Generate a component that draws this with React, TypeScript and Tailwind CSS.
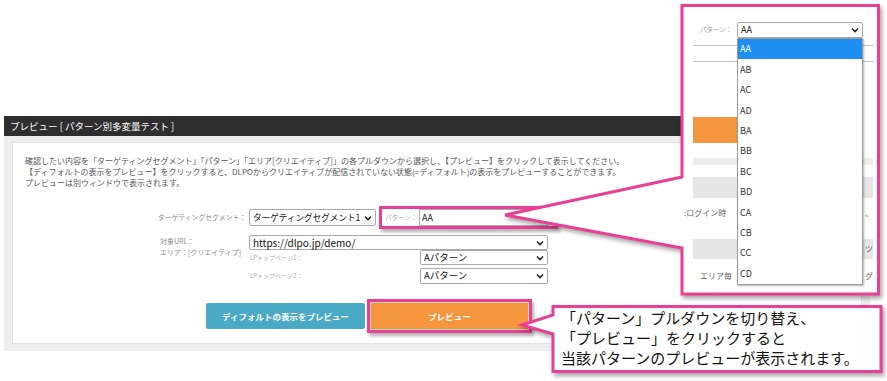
import React from "react";

type SelectProps = {
  value: string;
  className: string;
  textClass: string;
};

function Chevron() {
  return (
    <svg width="8" height="6" viewBox="0 0 8 6" className="shrink-0">
      <path d="M1 1.5l3 3 3-3" fill="none" stroke="#222" strokeWidth="1.6" />
    </svg>
  );
}

function FakeSelect({ value, className, textClass }: SelectProps) {
  return (
    <div
      className={`flex items-center justify-between rounded-[2px] border border-[#a9a9a9] bg-white pl-[3px] pr-[3px] ${className}`}
    >
      <span className={`whitespace-nowrap ${textClass}`}>{value}</span>
      <Chevron />
    </div>
  );
}

const options = ["AA", "AB", "AC", "AD", "BA", "BB", "BC", "BD", "CA", "CB", "CC", "CD"];

export default function App() {
  return (
    <div className="relative h-[381px] w-[887px] overflow-hidden bg-white font-['Noto_Sans_CJK_JP','Noto_Sans',sans-serif] text-[#333]">
      {/* page */}
      <div className="pl-[4px] pt-[116px]">
        <div className="w-[866px]">
          <div className="flex h-[20px] items-center bg-[#2e2e2e] pl-[6px] text-[9.5px] text-white">
            プレビュー [ パターン別多変量テスト ]
          </div>
          <div className="bg-[#eeeeee] px-[8px] pb-[7px] pt-[6px]">
            <div className="h-[202px] border border-[#e2e2e2] bg-white pl-[12px] pt-[12px]">
              <div className="whitespace-nowrap text-[8px] leading-[11px] text-[#555]">
                <p>確認したい内容を「ターゲティングセグメント」「パターン」「エリア[クリエイティブ]」の各プルダウンから選択し、【プレビュー】をクリックして表示してください。</p>
                <p>【ディフォルトの表示をプレビュー】をクリックすると、DLPOからクリエイティブが配信されていない状態(=ディフォルト)の表示をプレビューすることができます。</p>
                <p>プレビューは別ウィンドウで表示されます。</p>
              </div>

              <div className="ml-[135px] mt-[18px]">
                <div className="flex h-[23px] items-center">
                  <div className="flex w-[89px] justify-end whitespace-nowrap pr-[3px] text-[6.8px] text-[#888]">
                    ターゲティングセグメント：
                  </div>
                  <FakeSelect value="ターゲティングセグメント1" className="h-[17px] w-[127px]" textClass="text-[8.6px] text-[#111]" />
                  <div className="ml-[3px] flex h-[23px] w-[179px] items-center border-[3px] border-[#e84096] pl-[3px] shadow-[2px_3px_3px_rgba(0,0,0,0.3)]">
                    <span className="w-[34px] whitespace-nowrap text-[6.5px] text-[#aaa]">パターン：</span>
                    <div className="flex h-[17px] w-[129px] items-center border border-[#aaa] pl-[2px] text-[9px] text-[#111]">AA</div>
                  </div>
                </div>

                <div className="mt-[6px] flex">
                  <div className="w-[89px] pt-[1px] text-[7px] leading-[11px] text-[#888]">
                    <p>対象URL：</p>
                    <p className="whitespace-nowrap">エリア：[クリエイティブ]</p>
                  </div>
                  <div className="w-[299px]">
                    <FakeSelect value="https://dlpo.jp/demo/" className="h-[15px] w-full" textClass="text-[10px] text-[#111]" />
                    <div className="flex flex-col gap-[3px]">
                      <div className="flex h-[15px] items-center">
                        <span className="w-[171px] pl-[1px] text-[6px] text-[#aaa]">LPトップページ1：</span>
                        <FakeSelect value="Aパターン" className="h-[15px] w-[128px]" textClass="text-[9.5px] text-[#111]" />
                      </div>
                      <div className="flex h-[15px] items-center">
                        <span className="w-[171px] pl-[1px] text-[6px] text-[#aaa]">LPトップページ2：</span>
                        <FakeSelect value="Aパターン" className="h-[16px] w-[128px]" textClass="text-[9.5px] text-[#111]" />
                      </div>
                    </div>
                  </div>
                </div>
              </div>

              <div className="ml-[181px] mt-[16px] flex items-center">
                <div className="flex h-[26px] w-[159px] items-center justify-center rounded-[2px] bg-[#4aaac6] text-[8.5px] font-bold text-white">
                  ディフォルトの表示をプレビュー
                </div>
                <div className="ml-[2px] h-[34px] w-[165px] border-[3px] border-[#e84096] bg-[#f7d7b8] p-[1px] shadow-[2px_3px_3px_rgba(0,0,0,0.3)]">
                  <div className="flex h-full items-center justify-center bg-[#f5963f] text-[8.5px] font-bold text-white">プレビュー</div>
                </div>
              </div>
            </div>
          </div>
        </div>
      </div>

      {/* upper callout shape */}
      <svg
        width="887"
        height="381"
        viewBox="0 0 887 381"
        className="pointer-events-none absolute left-0 top-0 drop-shadow-[2px_3px_2px_rgba(0,0,0,0.35)]"
      >
        <polygon
          points="682,5.5 878.5,5.5 878.5,294 682,294 682,248 505,215 682,177"
          fill="#fff"
          stroke="#e84096"
          strokeWidth="3"
          strokeLinejoin="miter"
        />
      </svg>

      {/* upper callout content: zoomed dropdown */}
      <div className="absolute left-[684px] top-[7px] h-[285px] w-[193px] overflow-hidden bg-white">
        <div className="pl-[9px] pt-[38px]">
          <div className="h-px w-[180px] bg-[#bdbdbd]" />
          <div className="mt-[15px] h-px w-[180px] bg-[#bdbdbd]" />
          <div className="mt-[55px] h-[26px] w-[44px] bg-[#f5963f]" />
          <div className="mt-[15px] h-[7px] w-[180px] bg-[#ececec]" />
          <div className="mt-[12px] h-[21px] w-[180px] bg-[#e6e6e6]" />
          <div className="-ml-[9px] mt-[9px] flex w-[193px] justify-between whitespace-nowrap pr-[4px] text-[8px] leading-[12px] text-[#666]">
            <span>:ログイン時</span>
            <span>、</span>
          </div>
          <div className="mt-[20px] flex h-[20px] w-[180px] items-center justify-end bg-[#e6e6e6] text-[8px] text-[#666]">ツ</div>
          <div className="mt-[11px] flex w-[180px] justify-between whitespace-nowrap pl-[7px] text-[8px] leading-[12px] text-[#666]">
            <span>エリア毎</span>
            <span>グ</span>
          </div>
        </div>

        <div className="absolute left-[16px] top-[15px] flex items-center">
          <span className="w-[37px] whitespace-nowrap text-[6.5px] text-[#999]">パターン：</span>
          <FakeSelect value="AA" className="h-[16px] w-[126px]" textClass="text-[9px] text-[#111]" />
        </div>
        <div className="absolute left-[53px] top-[31px] w-[126px] border border-[#9a9a9a] bg-white shadow-[1px_1px_2px_rgba(0,0,0,0.3)]">
          {options.map((opt, i) => (
            <div
              key={opt}
              className={
                i === 0
                  ? "flex h-[20.4px] items-center bg-[#1e8ff0] pl-[2px] text-[9px] text-white"
                  : "flex h-[20.4px] items-center pl-[2px] text-[9px] text-[#333]"
              }
            >
              {opt}
            </div>
          ))}
        </div>
      </div>

      {/* lower callout */}
      <svg
        width="887"
        height="381"
        viewBox="0 0 887 381"
        className="pointer-events-none absolute left-0 top-0 drop-shadow-[2px_3px_2px_rgba(0,0,0,0.35)]"
      >
        <polygon
          points="553,306.5 881,306.5 881,371.5 553,371.5 553,334 522,325 553,315"
          fill="#fff"
          stroke="#e84096"
          strokeWidth="3"
        />
      </svg>
      <div className="absolute left-[556px] top-[308px] whitespace-nowrap pl-[5px] text-[15px] leading-[20px] text-[#111]">
        <p>「パターン」プルダウンを切り替え、</p>
        <p>「プレビュー」をクリックすると</p>
        <p>当該パターンのプレビューが表示されます。</p>
      </div>
    </div>
  );
}
